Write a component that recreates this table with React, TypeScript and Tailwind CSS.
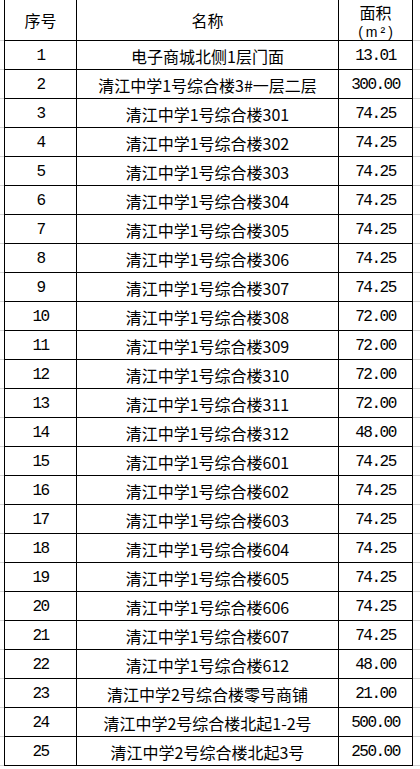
import React from "react";

const rows: [string, string][] = [
  ["电子商城北侧1层门面", "13.01"],
  ["清江中学1号综合楼3#一层二层", "300.00"],
  ["清江中学1号综合楼301", "74.25"],
  ["清江中学1号综合楼302", "74.25"],
  ["清江中学1号综合楼303", "74.25"],
  ["清江中学1号综合楼304", "74.25"],
  ["清江中学1号综合楼305", "74.25"],
  ["清江中学1号综合楼306", "74.25"],
  ["清江中学1号综合楼307", "74.25"],
  ["清江中学1号综合楼308", "72.00"],
  ["清江中学1号综合楼309", "72.00"],
  ["清江中学1号综合楼310", "72.00"],
  ["清江中学1号综合楼311", "72.00"],
  ["清江中学1号综合楼312", "48.00"],
  ["清江中学1号综合楼601", "74.25"],
  ["清江中学1号综合楼602", "74.25"],
  ["清江中学1号综合楼603", "74.25"],
  ["清江中学1号综合楼604", "74.25"],
  ["清江中学1号综合楼605", "74.25"],
  ["清江中学1号综合楼606", "74.25"],
  ["清江中学1号综合楼607", "74.25"],
  ["清江中学1号综合楼612", "48.00"],
  ["清江中学2号综合楼零号商铺", "21.00"],
  ["清江中学2号综合楼北起1-2号", "500.00"],
  ["清江中学2号综合楼北起3号", "250.00"],
];

const cjk = { fontFamily: '"Noto Sans CJK SC", "Noto Sans", sans-serif' };
const mono = { fontFamily: '"Liberation Mono", "DejaVu Sans Mono", monospace' };
const sans = { fontFamily: '"Liberation Sans", Arial, sans-serif' };

export default function App() {
  return (
    <div className="w-[420px] h-[769px] bg-white text-black overflow-hidden" style={cjk}>
      {/* header */}
      <div className="flex h-[41px]">
        <div className="w-[4px] border-b border-[#d4d4d4]" />
        <div className="w-[72px] border-l border-b border-black flex items-center justify-center text-[16px]">
          序号
        </div>
        <div className="w-[262px] border-l border-b border-black flex items-center justify-center text-[16px]">
          名称
        </div>
        <div className="w-[75px] border-l border-r border-b border-black flex flex-col items-center justify-center">
          <div className="h-[23px] leading-[23px] text-[16px]">面积</div>
          <div className="h-[16px] leading-[16px] text-[14px] tracking-[3px] pl-[3px]" style={sans}>
            (m²)
          </div>
        </div>
        <div className="flex-1 border-b border-[#d4d4d4]" />
      </div>
      {rows.map(([name, area], i) => (
        <div key={i} className="flex h-[29px]">
          <div className="w-[4px] border-b border-[#d4d4d4]" />
          <div
            className="w-[72px] border-l border-b border-black flex items-center justify-center pt-[2px] text-[16px] tracking-[-1.5px]"
            style={mono}
          >
            {i + 1}
          </div>
          <div className="w-[262px] border-l border-b border-black flex items-center justify-center pt-[2px] text-[16px] leading-[18px]">
            {name}
          </div>
          <div
            className="w-[75px] border-l border-r border-b border-black flex items-center justify-center pt-[2px] text-[16px] tracking-[-1.5px]"
            style={mono}
          >
            {area}
          </div>
          <div className="flex-1 border-b border-[#d4d4d4]" />
        </div>
      ))}
    </div>
  );
}
